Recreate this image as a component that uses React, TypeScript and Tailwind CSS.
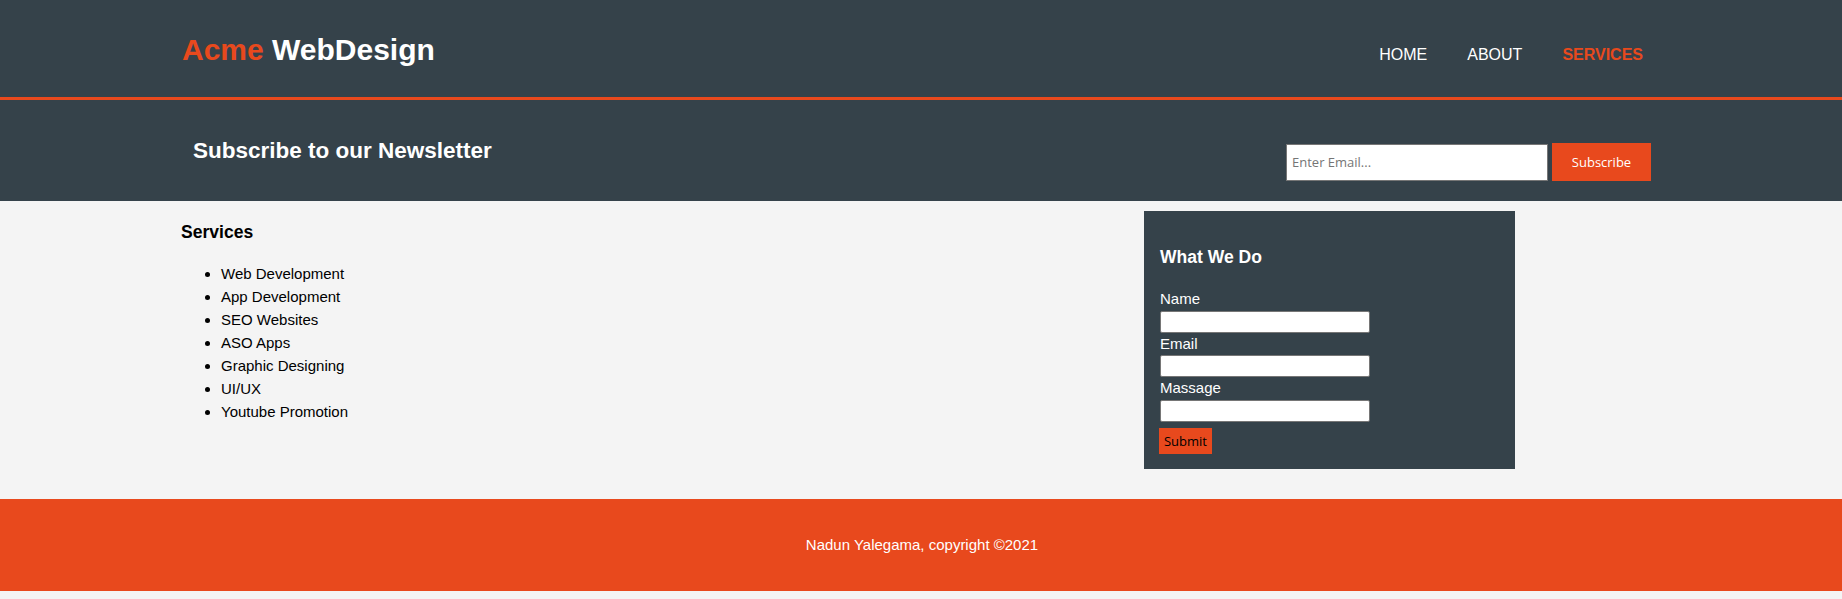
const services = [
  "Web Development",
  "App Development",
  "SEO Websites",
  "ASO Apps",
  "Graphic Designing",
  "UI/UX",
  "Youtube Promotion",
];

const App = () => {
  return (
    <div className="min-h-[599px] bg-[#f4f4f4] font-['Liberation_Sans',Arial,sans-serif] text-[15px] leading-[22.5px] text-black">
      {/* Header */}
      <header className="h-[100px] bg-[#35424a] border-b-[3px] border-[#e8491d]">
        <div className="flex justify-between pl-[182px] pr-[179px]">
          <h1 className="mt-[33px] text-[30px] leading-[34px] font-bold text-white">
            <span className="text-[#e8491d]">Acme</span> WebDesign
          </h1>
          <nav className="mt-[43px] flex text-[16px] leading-[24px] uppercase text-white">
            <a className="px-5">Home</a>
            <a className="px-5">About</a>
            <a className="px-5 font-bold text-[#e8491d]">Services</a>
          </nav>
        </div>
      </header>

      {/* Newsletter */}
      <section className="h-[101px] bg-[#35424a] flex justify-between pl-[193px] pr-[191px]">
        <h2 className="mt-[38px] text-[22.5px] leading-[26px] font-bold text-white">
          Subscribe to our Newsletter
        </h2>
        <form className="mt-[43px] flex items-center gap-[4px] h-[38px] font-['Open_Sans',sans-serif]">
          <input
            type="email"
            placeholder="Enter Email..."
            className="w-[262px] h-[37px] bg-white border border-[#767676] px-[5px] text-[13px] outline-none placeholder:text-[#757575]"
          />
          <button className="w-[99px] h-[38px] bg-[#e8491d] text-white text-[13px]">
            Subscribe
          </button>
        </form>
      </section>

      {/* Main */}
      <main className="h-[298px] flex justify-between pl-[181px] pr-[327px]">
        <article>
          <h3 className="mt-[17.5px] mb-[17px] text-[17.55px] leading-[26px] font-bold">
            Services
          </h3>
          <ul className="list-disc pl-[40px]">
            {services.map((s) => (
              <li key={s} className="leading-[23px]">{s}</li>
            ))}
          </ul>
        </article>

        <aside className="mt-[10px] w-[371px] h-[258px] bg-[#35424a] text-white px-[16px] pt-[15px] pb-[15px]">
          <h3 className="mt-[17.5px] mb-[18.5px] text-[17.55px] leading-[26px] font-bold">
            What We Do
          </h3>
          <form className="flex flex-col items-start">
            <label className="block">Name</label>
            <input type="text" className="w-[210px] h-[22px] bg-white border border-[#767676] rounded-[2px]" />
            <label className="block">Email</label>
            <input type="email" className="w-[210px] h-[22px] bg-white border border-[#767676] rounded-[2px]" />
            <label className="block">Massage</label>
            <input type="text" className="w-[210px] h-[22px] bg-white border border-[#767676] rounded-[2px]" />
            <button className="mt-[6.5px] -ml-px w-[53px] h-[26px] bg-[#e8491d] text-black text-[13px] leading-[26px] font-['Open_Sans',sans-serif]">
              Submit
            </button>
          </form>
        </aside>
      </main>

      {/* Footer */}
      <footer className="h-[92px] bg-[#e8491d] text-white flex items-center justify-center pl-[2px]">
        <p>Nadun Yalegama, copyright ©2021</p>
      </footer>
    </div>
  );
};

export default App;
